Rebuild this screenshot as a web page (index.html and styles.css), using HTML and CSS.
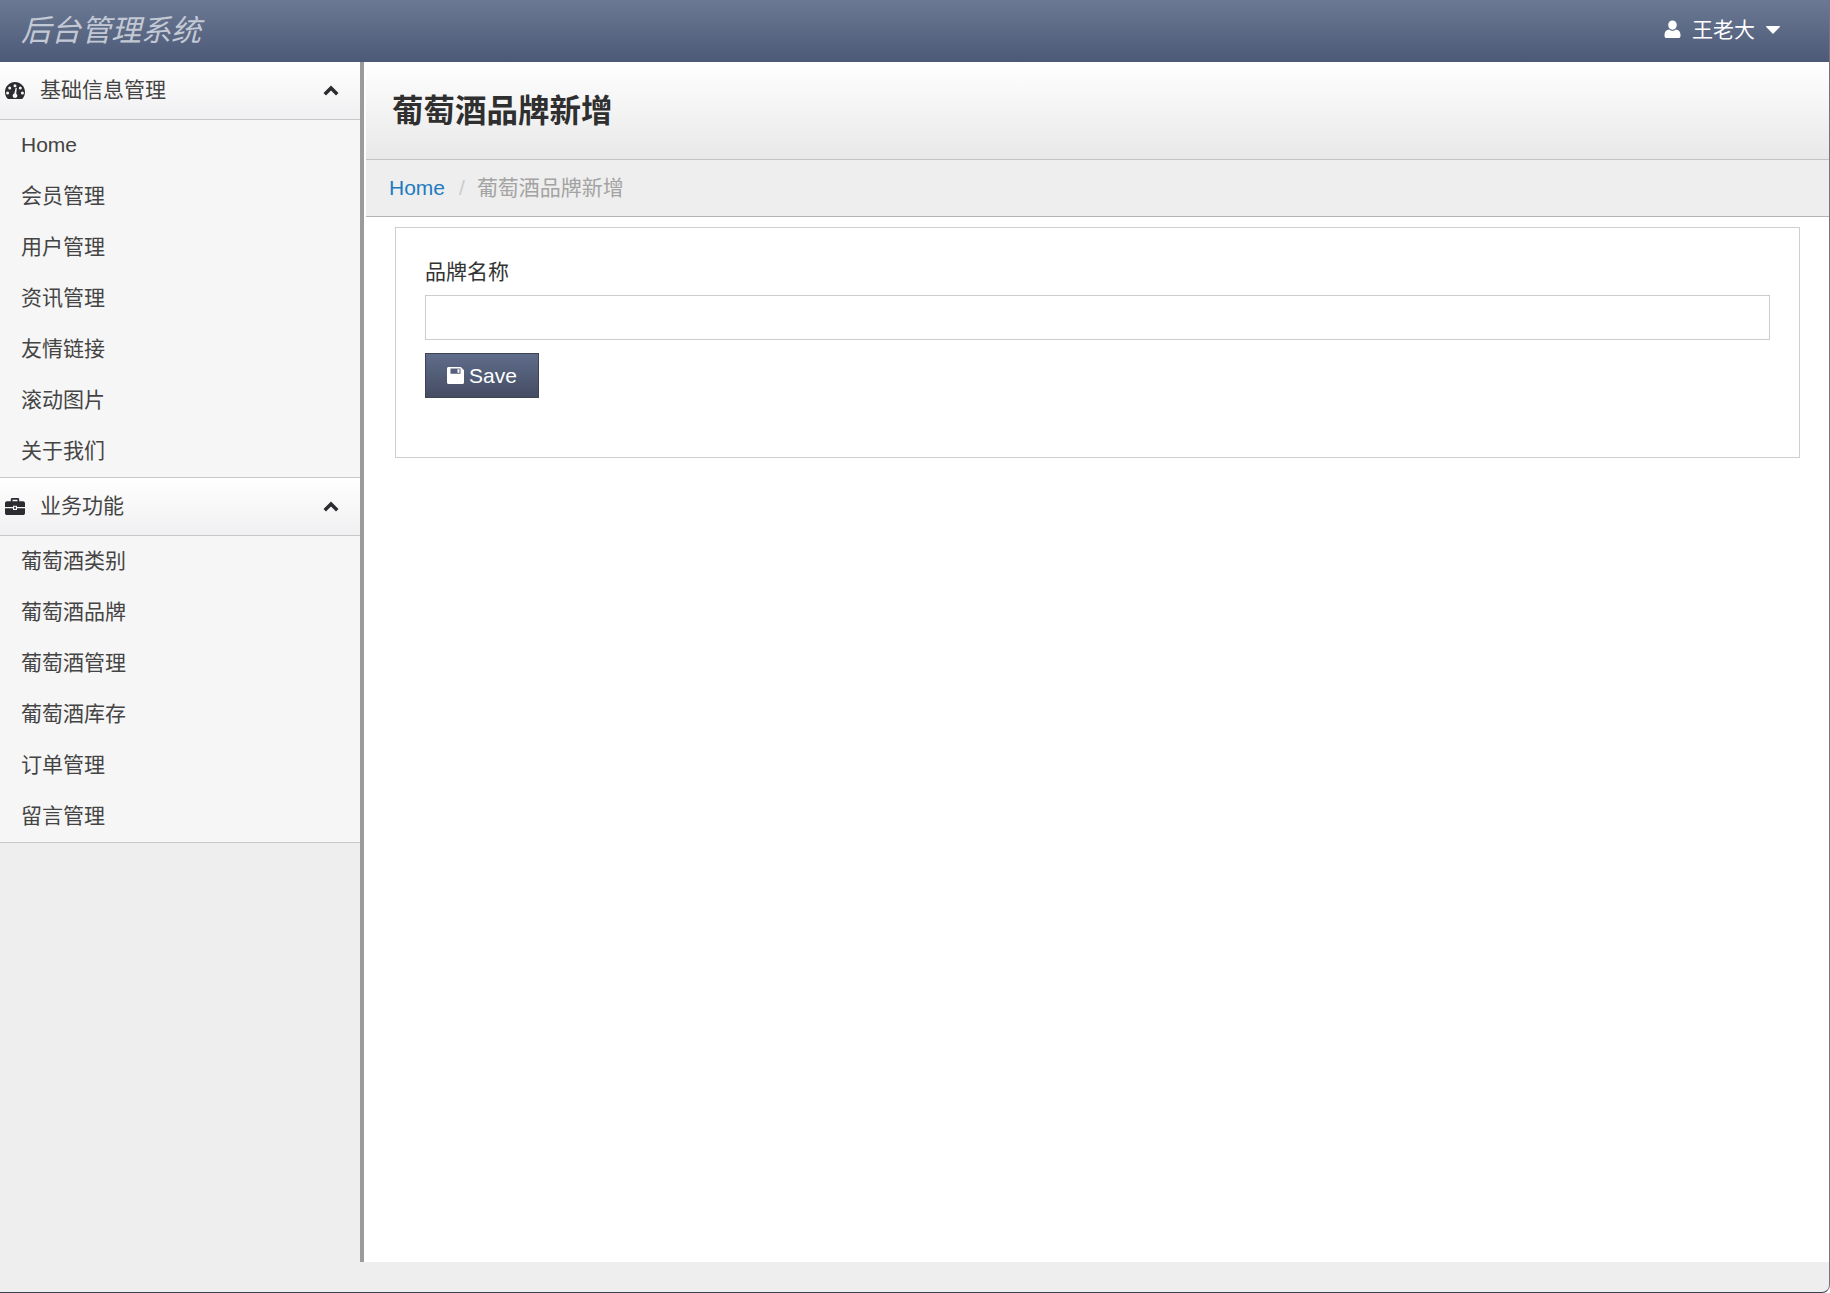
FILE: index.html
```html
<!DOCTYPE html>
<html lang="zh-CN">
<head>
    <meta charset="UTF-8">
    <meta name="viewport" content="width=device-width, initial-scale=1.0">
    <title>后台管理系统</title>
    <link rel="stylesheet" href="styles.css">
</head>
<body>
    <div class="frame">
        <div class="topbar">
            <a class="brand">后台管理系统</a>
            <div class="user">
                <svg class="user-icon" viewBox="0 0 17 18"><path d="M8.5 0.5c2.6 0 4.3 2 4.3 4.6s-1.7 4.7-4.3 4.7-4.3-2.1-4.3-4.7 1.7-4.6 4.3-4.6zM5.2 9.4c0.9 0.8 2 1.3 3.3 1.3s2.4-0.5 3.3-1.3c2.9 0.1 4.7 2.1 4.7 5.5v1c0 1.2-0.9 2.1-2.1 2.1H2.6c-1.2 0-2.1-0.9-2.1-2.1v-1c0-3.4 1.8-5.4 4.7-5.5z"/></svg>
                <span class="user-name">王老大</span>
                <svg class="caret" viewBox="0 0 14 8"><path d="M0.6 0h12.8c0.5 0 0.8 0.6 0.4 1L7.5 7.6c-0.3 0.3-0.7 0.3-1 0L0.2 1C-0.2 0.6 0.1 0 0.6 0z"/></svg>
            </div>
        </div>
        <div class="layout">
            <div class="sidebar">
                <div class="nav-header">
                    <svg class="nav-icon" viewBox="0 0 20 17"><path fill-rule="evenodd" d="M10 0C4.5 0 0 4.4 0 10c0 2.4 0.8 4.7 2.3 6.4 0.3 0.3 0.6 0.5 1 0.5h13.4c0.4 0 0.7-0.2 1-0.5C19.200 14.700 20 12.400 20 10 20 4.400 15.500 0 10 0zM10 2.200a1.500 1.500 0 1 1 0 3 1.500 1.500 0 0 1 0-3zM4.700 4.400a1.500 1.500 0 1 1 0 3 1.500 1.500 0 0 1 0-3zM15.300 4.400a1.500 1.500 0 1 1 0 3 1.500 1.500 0 0 1 0-3zM2.600 9.500a1.500 1.500 0 1 1 0 3 1.500 1.500 0 0 1 0-3zM17.400 9.500a1.500 1.500 0 1 1 0 3 1.500 1.500 0 0 1 0-3zM11.800 6.500l-0.600 5.300c0.700 0.400 1.100 1.100 1.100 1.900 0 1.300-1 2.300-2.300 2.300s-2.300-1-2.300-2.300c0-1 0.700-1.900 1.600-2.200l1.200-5.200c0.200-0.800 1.400-0.600 1.300 0.200z"/></svg>
                    <span class="nav-title">基础信息管理</span>
                    <svg class="chevron" viewBox="0 0 16 11"><path d="M8 0.500l7.500 7.400-2.500 2.500-5-5-5 5-2.500-2.500z"/></svg>
                </div>
                <ul class="nav-list">
                    <li>Home</li>
                    <li>会员管理</li>
                    <li>用户管理</li>
                    <li>资讯管理</li>
                    <li>友情链接</li>
                    <li>滚动图片</li>
                    <li>关于我们</li>
                </ul>
                <div class="nav-header">
                    <svg class="nav-icon" viewBox="0 0 20 17"><path fill-rule="evenodd" d="M7.200 0h5.600c0.800 0 1.400 0.600 1.400 1.400V3.300h3.900c1 0 1.900 0.800 1.900 1.900v3.900H12V7.800H8v1.300H0V5.200c0-1.100 0.900-1.900 1.900-1.900h3.900V1.400C5.800 0.600 6.400 0 7.200 0zM7.500 1.700v1.600h5V1.700zM0 10.200h8v1.900h4v-1.900h8v5c0 1-0.900 1.800-1.900 1.800H1.900C0.900 17 0 16.200 0 15.200zM9.200 8.800h1.600v2.200H9.200z"/></svg>
                    <span class="nav-title">业务功能</span>
                    <svg class="chevron" viewBox="0 0 16 11"><path d="M8 0.500l7.500 7.400-2.500 2.500-5-5-5 5-2.500-2.500z"/></svg>
                </div>
                <ul class="nav-list">
                    <li>葡萄酒类别</li>
                    <li>葡萄酒品牌</li>
                    <li>葡萄酒管理</li>
                    <li>葡萄酒库存</li>
                    <li>订单管理</li>
                    <li>留言管理</li>
                </ul>
            </div>
            <div class="main">
                <div class="page-header">
                    <h1>葡萄酒品牌新增</h1>
                </div>
                <div class="breadcrumb">
                    <a href="#">Home</a>
                    <span class="divider">/</span>
                    <span class="current">葡萄酒品牌新增</span>
                </div>
                <div class="content">
                    <div class="panel">
                        <label for="brand-name">品牌名称</label>
                        <input type="text" id="brand-name">
                        <button class="btn-save">
                            <svg class="save-icon" viewBox="0 0 17 17"><path fill-rule="evenodd" d="M1.500 0h12.300L17 3.200v12.300c0 0.800-0.700 1.500-1.500 1.500h-14C0.700 17 0 16.300 0 15.500v-14C0 0.700 0.700 0 1.500 0zM3.500 1.500v5.300h10V1.500zM10.500 2.300h2v3.500h-2z"/></svg>
                            Save
                        </button>
                    </div>
                </div>
            </div>
        </div>
    </div>
</body>
</html>
```

FILE: styles.css
```css
* {
    box-sizing: border-box;
}
body {
    margin: 0;
    font-family: "Liberation Sans", "Noto Sans CJK SC", sans-serif;
    font-size: 21px;
    color: #333;
}
.frame {
    height: 1293px;
    display: flex;
    flex-direction: column;
    padding-bottom: 30px;
    background-color: #eee;
    border-right: 1px solid #7d6f7f;
    border-bottom: 1px solid #3d4350;
    border-bottom-right-radius: 8px;
    overflow: hidden;
}
.topbar {
    height: 62px;
    flex: none;
    display: flex;
    align-items: center;
    justify-content: space-between;
    padding: 0 49px 0 21px;
    background: linear-gradient(to bottom, #6b7994, #4c5977);
}
.brand {
    margin-bottom: 7px;
    font-size: 30px;
    font-style: italic;
    color: #c3c9d4;
}
.user {
    display: flex;
    align-items: center;
    color: #fff;
}
.user-icon {
    width: 17px;
    height: 18px;
    margin-bottom: 4px;
    fill: #fff;
}
.user-name {
    margin-left: 11px;
    margin-bottom: 6px;
    font-size: 21px;
}
.caret {
    width: 14px;
    height: 8px;
    margin-left: 11px;
    margin-bottom: 2px;
    fill: #fff;
}
.layout {
    flex: 1;
    display: flex;
    min-height: 0;
}
.sidebar {
    width: 364px;
    flex: none;
    background-color: #eee;
    border-right: 4px solid #9b9b9b;
}
.nav-header {
    height: 58px;
    display: flex;
    align-items: center;
    padding: 0 21px 0 5px;
    background: linear-gradient(to bottom, #fff, #f0f0f2);
    border-bottom: 1px solid #c8c8c8;
}
.nav-icon {
    width: 20px;
    height: 17px;
    fill: #2b2b30;
}
.nav-title {
    flex: 1;
    margin-left: 15px;
    margin-bottom: 6px;
    color: #444;
}
.chevron {
    width: 16px;
    height: 11px;
    fill: #2b2b30;
}
.nav-list {
    margin: 0;
    padding: 0;
    list-style: none;
    color: #444;
    background-color: #f6f6f6;
    border-bottom: 1px solid #c8c8c8;
}
.nav-list li {
    height: 51px;
    line-height: 50px;
    padding-left: 21px;
}
.main {
    flex: 1;
    padding-left: 2px;
    background-color: #fff;
}
.page-header {
    height: 98px;
    display: flex;
    align-items: center;
    padding-left: 26px;
    background: linear-gradient(to bottom, #fff, #e8e8e8);
    border-bottom: 1px solid #c4c4c4;
}
.page-header h1 {
    margin: 0 0 5px;
    font-size: 31.500px;
    font-weight: bold;
    color: #2f2f2f;
}
.breadcrumb {
    height: 57px;
    display: flex;
    align-items: center;
    padding-left: 23px;
    background-color: #eee;
    border-bottom: 1px solid #b4b4b4;
}
.breadcrumb a {
    color: #1f7bc0;
    text-decoration: none;
}
.divider {
    margin: 0 12px 0 14px;
    color: #ccc;
}
.current {
    margin-bottom: 4px;
    color: #a3a3a3;
}
.content {
    padding: 10px 29px 0 29px;
}
.panel {
    height: 231px;
    padding: 29px;
    border: 1px solid #cfcfcf;
}
.panel label {
    display: block;
    margin-bottom: 8px;
    line-height: 30px;
}
.panel input {
    display: block;
    width: 100%;
    height: 45px;
    border: 1px solid #ccc;
    background-color: #fff;
    outline: none;
}
.btn-save {
    display: flex;
    align-items: center;
    width: 114px;
    height: 45px;
    margin-top: 13px;
    padding: 0 0 0 21px;
    font-family: inherit;
    font-size: 21px;
    color: #fff;
    background: linear-gradient(to bottom, #5f6c8a, #454d63);
    border: 1px solid #3f4452;
}
.save-icon {
    width: 17px;
    height: 17px;
    margin-right: 5px;
    fill: #fff;
}
```
